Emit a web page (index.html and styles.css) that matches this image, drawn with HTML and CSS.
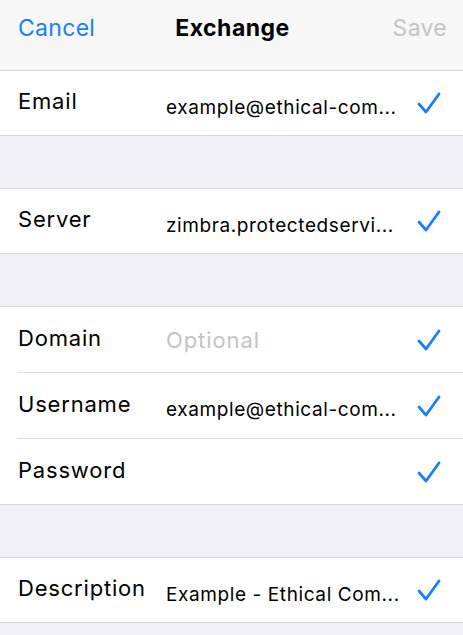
FILE: index.html
```html
<!DOCTYPE html>
<html>
<head>
<meta charset="utf-8">
<link rel="stylesheet" href="styles.css">
</head>
<body>
<div class="screen">
  <header class="nav">
    <span class="nav-btn cancel">Cancel</span>
    <span class="nav-title">Exchange</span>
    <span class="nav-btn save">Save</span>
  </header>

  <section class="group">
    <div class="row">
      <span class="label">Email</span>
      <span class="value">example@ethical-com...</span>
      <svg class="check" viewBox="0 0 24 22"><path d="M2 12 L9 20 L22 2"/></svg>
    </div>
  </section>

  <div class="gap"></div>

  <section class="group">
    <div class="row">
      <span class="label">Server</span>
      <span class="value">zimbra.protectedservi...</span>
      <svg class="check" viewBox="0 0 24 22"><path d="M2 12 L9 20 L22 2"/></svg>
    </div>
  </section>

  <div class="gap"></div>

  <section class="group">
    <div class="row tall">
      <span class="label">Domain</span>
      <span class="value placeholder">Optional</span>
      <svg class="check" viewBox="0 0 24 22"><path d="M2 12 L9 20 L22 2"/></svg>
    </div>
    <div class="row tall">
      <span class="label">Username</span>
      <span class="value">example@ethical-com...</span>
      <svg class="check" viewBox="0 0 24 22"><path d="M2 12 L9 20 L22 2"/></svg>
    </div>
    <div class="row tall">
      <span class="label">Password</span>
      <span class="value"></span>
      <svg class="check" viewBox="0 0 24 22"><path d="M2 12 L9 20 L22 2"/></svg>
    </div>
  </section>

  <div class="gap"></div>

  <section class="group">
    <div class="row">
      <span class="label">Description</span>
      <span class="value">Example - Ethical Com...</span>
      <svg class="check" viewBox="0 0 24 22"><path d="M2 12 L9 20 L22 2"/></svg>
    </div>
  </section>
</div>
</body>
</html>
```

FILE: styles.css
```css
html, body {
  margin: 0;
  padding: 0;
  background: #f0f0f5;
}
body {
  font-family: Inter, "Noto Sans", "Liberation Sans", sans-serif;
  color: #000;
  width: 463px;
  height: 635px;
  overflow: hidden;
}
.screen {
  display: flex;
  flex-direction: column;
}
.nav {
  background: #f7f7f7;
  border-bottom: 1px solid #d6d6d9;
  display: flex;
  align-items: center;
  justify-content: space-between;
  padding: 0 16px 14px 18px;
  box-sizing: content-box;
  height: 56px;
  position: relative;
}
.nav-btn {
  font-size: 23px;
  letter-spacing: 0.3px;
}
.cancel { color: #1a7efb; }
.save { color: #c4c4c6; }
.nav-title {
  position: absolute;
  left: 0;
  right: 0;
  top: 0;
  bottom: 14px;
  display: flex;
  align-items: center;
  justify-content: center;
  font-size: 23px;
  font-weight: 700;
  letter-spacing: 0.5px;
  pointer-events: none;
  padding-left: 2px;
}
.group {
  background: #fff;
  border-bottom: 1px solid #d8d8dc;
}
.gap {
  height: 52px;
  border-bottom: 1px solid #d8d8dc;
}
.row {
  height: 64px;
  display: flex;
  align-items: center;
  padding: 0 22px 0 18px;
  position: relative;
}
.row.tall { height: 65px; }
.row.tall + .row.tall::before {
  content: "";
  position: absolute;
  top: -1px;
  left: 17px;
  right: 0;
  border-top: 1px solid #dcdce0;
}
.row.tall + .row.tall { margin-top: 1px; }
.label {
  width: 148px;
  flex: none;
  font-size: 22px;
  letter-spacing: 0.8px;
  margin-top: -4px;
}
.value {
  flex: 1;
  font-size: 19px;
  letter-spacing: 0.6px;
  margin-top: 8px;
  white-space: nowrap;
  overflow: hidden;
}
.value.placeholder {
  color: #c4c4c6;
  font-size: 22px;
  letter-spacing: 0.9px;
  margin-top: 0;
}
.check {
  width: 24px;
  height: 22px;
  flex: none;
  fill: none;
  stroke: #1a7efb;
  stroke-width: 2.8;
  stroke-linecap: round;
  stroke-linejoin: round;
}
```
